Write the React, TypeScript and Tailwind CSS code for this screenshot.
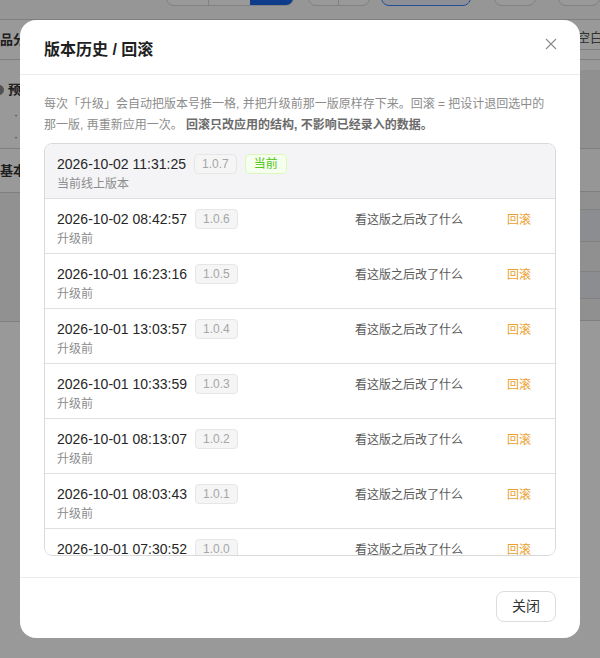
import React from "react";

const FONT = '"Liberation Sans", "Noto Sans CJK SC", sans-serif';

type Version = { time: string; ver: string; note: string; current?: boolean };

const versions: Version[] = [
  { time: "2026-10-02 11:31:25", ver: "1.0.7", note: "当前线上版本", current: true },
  { time: "2026-10-02 08:42:57", ver: "1.0.6", note: "升级前" },
  { time: "2026-10-01 16:23:16", ver: "1.0.5", note: "升级前" },
  { time: "2026-10-01 13:03:57", ver: "1.0.4", note: "升级前" },
  { time: "2026-10-01 10:33:59", ver: "1.0.3", note: "升级前" },
  { time: "2026-10-01 08:13:07", ver: "1.0.2", note: "升级前" },
  { time: "2026-10-01 08:03:43", ver: "1.0.1", note: "升级前" },
  { time: "2026-10-01 07:30:52", ver: "1.0.0", note: "升级前" },
];

function CloseIcon() {
  return (
    <svg width="12" height="12" viewBox="0 0 12 12" fill="none" stroke="#8c8c8c" strokeWidth="1.1">
      <path d="M1 1L11 11M11 1L1 11" />
    </svg>
  );
}

function VersionRow({ v }: { v: Version }) {
  return (
    <div
      className={
        "flex h-[55px] shrink-0 items-start border-b border-[#e0e0e0] pl-[12px] pr-[24px] pt-[9px] " +
        (v.current ? "bg-[#f4f4f6]" : "bg-white")
      }
    >
      <div className="flex-1">
        <div className="flex h-[22px] items-center">
          <span className="text-[14px] text-[#262626]">{v.time}</span>
          <span className="ml-[8px] rounded-[4px] border border-[#e6e6e6] bg-[#f5f5f5] px-[7px] text-[12px] leading-[18px] text-[#a6a6a6]">
            {v.ver}
          </span>
          {v.current && (
            <span className="ml-[8px] rounded-[4px] border border-[#d9f7be] bg-[#f6ffed] px-[8px] text-[12px] leading-[18px] text-[#52c41a]">
              当前
            </span>
          )}
        </div>
        <div className="text-[12px] leading-[18px] text-[#8c8c8c]">{v.note}</div>
      </div>
      {!v.current && (
        <div className="mt-[1px] flex h-[22px] items-center gap-[44px] text-[12px]">
          <span className="text-[#595959]">看这版之后改了什么</span>
          <span className="text-[#eb9f2f]">回滚</span>
        </div>
      )}
    </div>
  );
}

function BackgroundPage() {
  return (
    <div className="flex h-full flex-col bg-white text-[13px] text-[#333]">
      {/* toolbar, scrolled so only the lower edge of its buttons shows */}
      <div className="h-[20px] shrink-0 overflow-hidden border-b border-[#d4d4d4] bg-[#fafafa]">
        <div className="-mt-[26px] flex items-start pl-[166px]">
          <div className="flex h-[32px] overflow-hidden rounded-[8px] border border-[#d9d9d9] bg-white">
            <div className="w-[47px] border-r border-[#d9d9d9]" />
            <div className="w-[46px]" />
            <div className="w-[48px] bg-[#1464e6]" />
          </div>
          <div className="ml-[14px] flex h-[32px] overflow-hidden rounded-[8px] border border-[#d9d9d9] bg-white">
            <div className="w-[34px] border-r border-[#d9d9d9]" />
            <div className="w-[34px]" />
          </div>
          <div className="ml-[11px] h-[32px] w-[100px] rounded-[8px] border border-[#3b82f6] bg-[#eaf1fb]" />
          <div className="ml-[23px] h-[32px] w-[47px] rounded-[8px] border border-[#d9d9d9] bg-white" />
          <div className="ml-[22px] h-[32px] w-[47px] rounded-[8px] border border-[#d9d9d9] bg-white" />
        </div>
      </div>
      <div className="flex flex-1">
        {/* left column */}
        <div className="flex flex-1 flex-col">
          <div className="flex h-[40px] shrink-0 items-center whitespace-nowrap border-b border-[#d4d4d4] font-bold">
            品分类
          </div>
          <div className="flex h-[89px] shrink-0 flex-col border-b border-[#d4d4d4] pt-[20px]">
            <div className="flex items-center gap-[4px] font-bold text-[#333]">
              <span className="-ml-[6px] h-[10px] w-[10px] rounded-full bg-[#888]" />
              <span>预览</span>
            </div>
            <div className="mt-[4px] pl-[14px] text-[12px] leading-[22px] text-[#666]">· 字段</div>
            <div className="pl-[14px] text-[12px] leading-[22px] text-[#666]">· 字段</div>
          </div>
          <div className="flex h-[44px] shrink-0 items-center border-b border-[#d4d4d4] font-bold">
            基本信息
          </div>
          <div className="h-[129px] shrink-0 border-b border-[#d4d4d4] bg-[#f2f2f2]" />
          <div className="flex-1 bg-white" />
        </div>
        {/* right column */}
        <div className="flex w-[60px] flex-col overflow-hidden">
          <div className="flex h-[30px] shrink-0 items-end whitespace-nowrap border-b border-[#d4d4d4] pb-[2px] pl-[37px] text-[#555]">
            空白表
          </div>
          <div className="h-[10px] shrink-0 border-b border-[#d4d4d4]" />
          <div className="h-[10px] shrink-0" />
          <div className="h-[79px] shrink-0 border-b border-[#d4d4d4] bg-[#f0f0f0]" />
          <div className="h-[43px] shrink-0 border-b border-[#d4d4d4] bg-[#fafafa]" />
          <div className="h-[17px] shrink-0 bg-[#f0f0f0]" />
          <div className="h-[33px] shrink-0 border-y border-[#d8d8d8] bg-[#e9ecf2]" />
          <div className="h-[29px] shrink-0 bg-[#f0f0f0]" />
          <div className="h-[28px] shrink-0 border-y border-[#d8d8d8] bg-[#e9ecf2]" />
          <div className="h-[22px] shrink-0 border-b border-[#d4d4d4] bg-[#f0f0f0]" />
          <div className="flex-1 bg-white" />
        </div>
      </div>
    </div>
  );
}

export default function App() {
  return (
    <div className="relative h-[658px] w-full overflow-hidden" style={{ fontFamily: FONT }}>
      <BackgroundPage />
      <div className="absolute inset-0 flex items-center justify-center bg-black/40">
        <div className="flex h-[618px] w-[560px] flex-col overflow-hidden rounded-[16px] bg-white">
          <div className="flex shrink-0 items-start justify-between border-b border-[#ebebeb] px-[24px] pb-[13px] pt-[19px]">
            <h2 className="text-[16px] font-bold leading-[22px] text-[#1f1f1f]">版本历史 / 回滚</h2>
            <button className="-mr-[1px] -mt-[1px] flex h-[12px] w-[12px] items-center justify-center">
              <CloseIcon />
            </button>
          </div>
          <div className="flex min-h-0 flex-1 flex-col px-[24px] pb-[21px] pt-[19px]">
            <p className="text-[12px] leading-[21px] text-[#8c8c8c]">
              每次「升级」会自动把版本号推一格, 并把升级前那一版原样存下来。回滚 = 把设计退回选中的
              <br />
              那一版, 再重新应用一次。 <span className="font-bold text-[#6b6b6b]">回滚只改应用的结构, 不影响已经录入的数据。</span>
            </p>
            <div className="mt-[7px] flex h-[413px] flex-col overflow-hidden rounded-[8px] border border-[#d9d9d9]">
              {versions.map((v) => (
                <VersionRow key={v.ver} v={v} />
              ))}
            </div>
          </div>
          <div className="flex shrink-0 justify-end border-t border-[#ebebeb] px-[24px] pb-[16px] pt-[13px]">
            <button className="h-[31px] w-[60px] rounded-[8px] border border-[#dcdcdc] bg-white text-[14px] text-[#333]">
              关闭
            </button>
          </div>
        </div>
      </div>
    </div>
  );
}
